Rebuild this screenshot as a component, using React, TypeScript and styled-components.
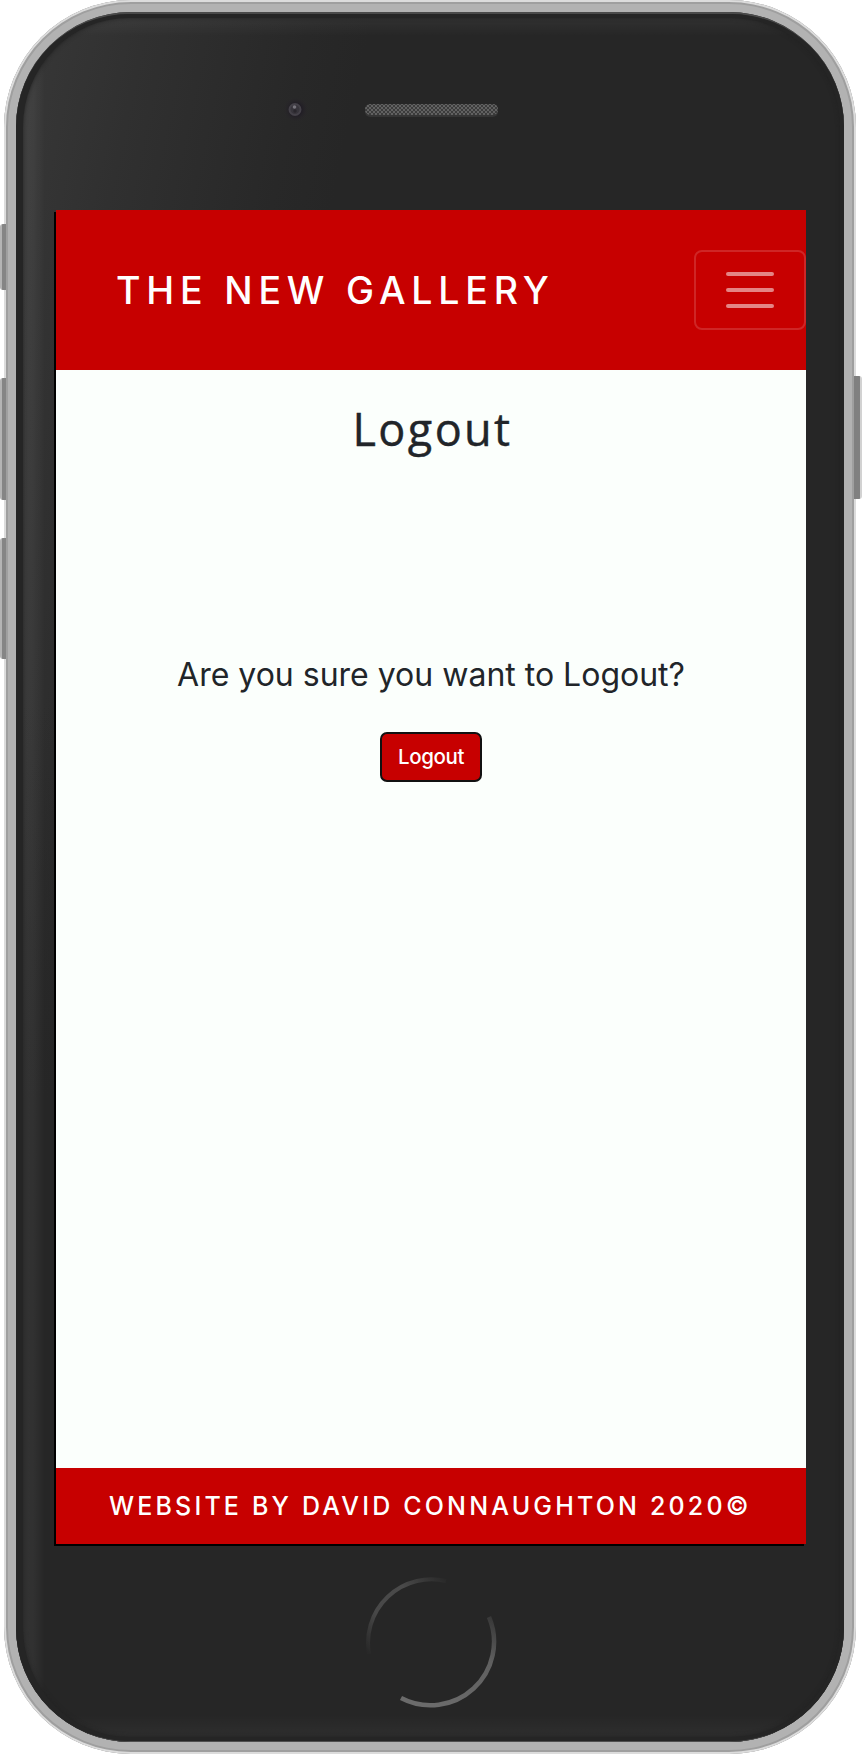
import React from "react";
import styled, { createGlobalStyle } from "styled-components";

const GlobalStyle = createGlobalStyle`
  *, *::before, *::after { box-sizing: border-box; }
  body { margin: 0; background: #fff; font-family: Inter, "Liberation Sans", sans-serif; }
  h1, h2, p { margin: 0; }
`;

const Stage = styled.div`
  position: relative;
  width: 862px;
  height: 1754px;
  padding: 0 6px 0 4px;
  overflow: hidden;
`;

const SideKey = styled.span<{ $side: "left" | "right"; $top: number; $height: number }>`
  position: absolute;
  z-index: 1;
  ${(p) => p.$side}: 0;
  top: ${(p) => p.$top}px;
  width: ${(p) => (p.$side === "left" ? 6 : 8)}px;
  height: ${(p) => p.$height}px;
  border-radius: ${(p) => (p.$side === "left" ? "3px 0 0 3px" : "0 3px 3px 0")};
  background: ${(p) =>
    p.$side === "left"
      ? "linear-gradient(90deg, #b4b4b4 0 2px, #858585 2px)"
      : "linear-gradient(90deg, #808080 0 6px, #d2d2d2 6px)"};
`;

const Body = styled.div`
  position: relative;
  height: 1754px;
  padding: 12px;
  border-radius: 127px;
  background: #b2b2b2;
  box-shadow: inset 0 0 0 2px #dcdcdc, inset 0 0 0 4px #9f9f9f;
`;

const Face = styled.div`
  position: relative;
  height: 1730px;
  display: flex;
  flex-direction: column;
  align-items: center;
  border-radius: 115px;
  background:
    linear-gradient(102deg, #383838 0, #303030 130px, #282828 290px, rgba(38, 38, 38, 0) 350px) 0 0 / 100% 1100px no-repeat,
    #262626;

  &::before {
    content: "";
    position: absolute;
    inset: 0;
    border-radius: inherit;
    background: linear-gradient(180deg, transparent 40%, #262626 63%);
    box-shadow: inset 0 2px 0 #4a4a4a, inset 0 -1px 0 #505050;
  }

  &::after {
    content: "";
    position: absolute;
    inset: 2px 0 1px;
    border-radius: 113px;
    border: 7px solid #252525;
    border-top-width: 4px;
    border-right-width: 4px;
    border-bottom-width: 4px;
    box-shadow: inset 0 0 4px #222;
    background:
      linear-gradient(90deg, rgba(255, 255, 255, 0.06), rgba(255, 255, 255, 0.05) 10px, transparent 22px),
      linear-gradient(180deg, rgba(255, 255, 255, 0.05), transparent 18px),
      linear-gradient(0deg, rgba(255, 255, 255, 0.04), transparent 22px);
    background-clip: padding-box;
  }
`;

const Forehead = styled.div`
  position: relative;
  z-index: 1;
  flex: none;
  width: 750px;
  height: 198px;
  display: flex;
  align-items: flex-start;
  padding: 84px 0 0 227px;
`;

const Camera = styled.svg`
  width: 27px;
  height: 27px;
`;

const Speaker = styled.svg`
  width: 133px;
  height: 15px;
  margin: 7px 0 0 56px;
`;

const Screen = styled.main`
  position: relative;
  z-index: 1;
  flex: none;
  align-self: flex-start;
  width: 750px;
  height: 1334px;
  margin-left: 40px;
  display: flex;
  flex-direction: column;
  background: #fbfffc;
  color: #212529;
  box-shadow: -2px 2px 0 #000;
`;

const Navbar = styled.header`
  height: 160px;
  display: flex;
  align-items: center;
  justify-content: space-between;
  padding-left: 60px;
  background: #c70000;
`;

const Brand = styled.h1`
  font-size: 37.5px;
  font-weight: 500;
  line-height: 48px;
  padding-top: 1px;
  letter-spacing: 5.8px;
  color: #fff;
  white-space: nowrap;
`;

const Toggler = styled.button`
  width: 112px;
  height: 80px;
  padding: 0;
  display: flex;
  flex-direction: column;
  align-items: center;
  justify-content: center;
  gap: 12px;
  border: 2px solid rgba(255, 255, 255, 0.15);
  border-radius: 8px;
  background: transparent;
`;

const TogglerBar = styled.span`
  width: 48px;
  height: 4px;
  border-radius: 2px;
  background: rgba(255, 255, 255, 0.52);
`;

const Content = styled.section`
  flex: 1;
  display: flex;
  flex-direction: column;
  align-items: center;
  padding-top: 29px;
`;

const Title = styled.h2`
  font-family: "Open Sans", "Noto Sans", sans-serif;
  font-size: 45px;
  font-weight: 400;
  line-height: 60px;
  letter-spacing: 2.4px;
  margin-left: 3px;
  -webkit-text-stroke: 0.4px #212529;
`;

const Question = styled.p`
  margin-top: 192px;
  font-size: 32px;
  line-height: 48px;
  white-space: nowrap;
`;

const LogoutButton = styled.button`
  margin-top: 33px;
  width: 102px;
  height: 50px;
  padding: 0;
  border: 2px solid #111;
  border-radius: 7px;
  background: #c70000;
  color: #fff;
  font: 500 20.5px/46px Inter, "Liberation Sans", sans-serif;
  letter-spacing: -0.4px;
`;

const Footer = styled.footer`
  height: 76px;
  display: flex;
  align-items: center;
  padding-left: 53px;
  background: #c70000;
  color: #fff;
  font-size: 25px;
  font-weight: 500;
  line-height: 36px;
  letter-spacing: 3.17px;
  white-space: nowrap;
`;

const Chin = styled.div`
  position: relative;
  z-index: 1;
  flex: 1;
  padding: 32px 0 0 4px;
`;

const HomeRing = styled.svg`
  display: block;
  width: 134px;
  height: 134px;
`;

export default function App() {
  return (
    <>
      <GlobalStyle />
      <Stage>
        <SideKey $side="left" $top={224} $height={66} />
        <SideKey $side="left" $top={378} $height={122} />
        <SideKey $side="left" $top={538} $height={121} />
        <SideKey $side="right" $top={376} $height={123} />
        <Body>
          <Face>
            <Forehead>
              <Camera viewBox="0 0 27 27">
                <defs>
                  <radialGradient id="lens">
                    <stop offset="0.45" stopColor="#211d25" />
                    <stop offset="1" stopColor="#2a282b" stopOpacity="0" />
                  </radialGradient>
                </defs>
                <circle cx="14" cy="13.5" r="13" fill="url(#lens)" />
                <circle cx="13" cy="13.5" r="5.5" fill="#37343b" stroke="#444148" strokeWidth="2" />
                <circle cx="13" cy="15" r="1.7" fill="#29262c" />
                <circle cx="12.5" cy="11" r="1.8" fill="#77747c" />
              </Camera>
              <Speaker viewBox="0 0 133 15">
                <defs>
                  <pattern id="mesh" width="4" height="4" patternUnits="userSpaceOnUse">
                    <rect width="4" height="4" fill="#3c3c3c" />
                    <rect width="2" height="2" fill="#626262" />
                    <rect x="2" y="2" width="2" height="2" fill="#626262" />
                  </pattern>
                </defs>
                <rect y="2" width="133" height="12" rx="5" fill="#353535" />
                <rect y="1" width="133" height="11" rx="5" fill="url(#mesh)" />
              </Speaker>
            </Forehead>
            <Screen>
              <Navbar>
                <Brand>THE NEW GALLERY</Brand>
                <Toggler aria-label="Toggle navigation">
                  <TogglerBar />
                  <TogglerBar />
                  <TogglerBar />
                </Toggler>
              </Navbar>
              <Content>
                <Title>Logout</Title>
                <Question>Are you sure you want to Logout?</Question>
                <LogoutButton>Logout</LogoutButton>
              </Content>
              <Footer>WEBSITE BY DAVID CONNAUGHTON 2020©</Footer>
            </Screen>
            <Chin>
              <HomeRing viewBox="0 0 134 134" fill="none" strokeLinecap="butt">
                <defs>
                  <linearGradient id="ringTop" x1="2" y1="75" x2="82" y2="4" gradientUnits="userSpaceOnUse">
                    <stop stopColor="#282828" />
                    <stop offset="0.3" stopColor="#484848" />
                    <stop offset="0.65" stopColor="#4a4a4a" />
                    <stop offset="1" stopColor="#282828" />
                  </linearGradient>
                  <linearGradient id="ringBottom" x1="126" y1="36" x2="72" y2="131" gradientUnits="userSpaceOnUse">
                    <stop stopColor="#333" />
                    <stop offset="0.4" stopColor="#606060" />
                    <stop offset="1" stopColor="#6b6b6b" />
                  </linearGradient>
                </defs>
                <path d="M4 78A63.5 63.5 0 0 1 81 5" stroke="url(#ringTop)" strokeWidth="4" />
                <path d="M124 41A63.5 63.5 0 0 1 36 122" stroke="url(#ringBottom)" strokeWidth="4.5" />
              </HomeRing>
            </Chin>
          </Face>
        </Body>
      </Stage>
    </>
  );
}
